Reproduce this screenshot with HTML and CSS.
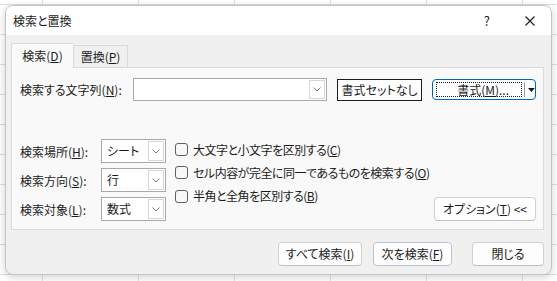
FILE: index.html
```html
<!DOCTYPE html>
<html lang="ja">
<head>
<meta charset="utf-8">
<link rel="stylesheet" href="styles.css">
</head>
<body>
<div class="dialog">
  <div class="titlebar">
    <span class="title">検索と置換</span>
    <span class="spacer"></span>
    <span class="help">?</span>
    <svg class="close" width="10" height="10" viewBox="0 0 10 10"><path d="M0.5 0.5L9.5 9.5M9.5 0.5L0.5 9.5" stroke="#1b1b1b" stroke-width="1.1" fill="none"/></svg>
  </div>
  <div class="content">
    <div class="tabs">
      <div class="tab active">検索(<u>D</u>)</div>
      <div class="tab">置換(<u>P</u>)</div>
    </div>
    <div class="panel">
      <div class="find-row">
        <label class="find-label">検索する文字列(<u>N</u>):</label>
        <div class="combo">
          <span class="combo-text"></span>
          <span class="drop"><svg width="8" height="5" viewBox="0 0 8 5"><path d="M0.5 0.5L4 4L7.5 0.5" stroke="#7a7a7a" fill="none"/></svg></span>
        </div>
        <button class="btn btn-noformat">書式セットなし</button>
        <div class="split">
          <span class="split-main">書式(<u>M</u>)...</span>
          <span class="split-div"></span>
          <svg class="split-arrow" width="7" height="4" viewBox="0 0 7 4"><path d="M0 0H7L3.5 4Z" fill="#1b1b1b"/></svg>
        </div>
      </div>
      <div class="options">
        <div class="selects">
          <label>検索場所(<u>H</u>):</label>
          <div class="select"><span class="select-text">シート</span><span class="drop"><svg width="8" height="5" viewBox="0 0 8 5"><path d="M0.5 0.5L4 4L7.5 0.5" stroke="#7a7a7a" fill="none"/></svg></span></div>
          <label>検索方向(<u>S</u>):</label>
          <div class="select"><span class="select-text">行</span><span class="drop"><svg width="8" height="5" viewBox="0 0 8 5"><path d="M0.5 0.5L4 4L7.5 0.5" stroke="#7a7a7a" fill="none"/></svg></span></div>
          <label>検索対象(<u>L</u>):</label>
          <div class="select"><span class="select-text">数式</span><span class="drop"><svg width="8" height="5" viewBox="0 0 8 5"><path d="M0.5 0.5L4 4L7.5 0.5" stroke="#7a7a7a" fill="none"/></svg></span></div>
        </div>
        <div class="checks">
          <div class="check"><span class="box"></span>大文字と小文字を区別する(<u>C</u>)</div>
          <div class="check"><span class="box"></span>セル内容が完全に同一であるものを検索する(<u>O</u>)</div>
          <div class="check"><span class="box"></span>半角と全角を区別する(<u>B</u>)</div>
        </div>
        <span class="spacer"></span>
        <button class="btn btn-options">オプション(<u>T</u>) &lt;&lt;</button>
      </div>
    </div>
    <div class="footer">
      <button class="btn btn-all">すべて検索(<u>I</u>)</button>
      <button class="btn btn-next">次を検索(<u>F</u>)</button>
      <button class="btn btn-close">閉じる</button>
    </div>
  </div>
</div>
</body>
</html>
```
FILE: styles.css
```css
* { box-sizing: border-box; }
html, body { height: 100%; }
body {
  margin: 0;
  background-color: #ffffff;
  background-image:
    linear-gradient(to right, #dedede 1px, transparent 1px),
    linear-gradient(to bottom, #dedede 1px, transparent 1px);
  background-size: 96px 100%, 100% 30px;
  background-position: 42px 0, 0 4px;
  font-family: "Noto Sans CJK JP", "Noto Sans", sans-serif;
  font-feature-settings: "palt";
  font-size: 12px;
  color: #1b1b1b;
  overflow: hidden;
  white-space: nowrap;
}
u { text-decoration: underline; text-underline-offset: 1px; }
.dialog {
  margin: 5px;
  width: 547px;
  height: 270px;
  border: 1px solid #c4c4c4;
  border-radius: 8px;
  background: #f0f0f0;
  overflow: hidden;
  display: flex;
  flex-direction: column;
  box-shadow: 0 2px 8px rgba(0,0,0,0.18);
}
.titlebar {
  height: 29px;
  flex: none;
  background: #ffffff;
  display: flex;
  align-items: center;
  padding-left: 7px;
}
.title { font-size: 12px; line-height: 14px; }
.spacer { flex: 1; }
.help { font-size: 13px; margin-right: 35px; line-height: 14px; }
.close { margin-right: 16px; }
.content {
  padding: 8px 7px 0 5px;
  display: flex;
  flex-direction: column;
}
.tabs {
  display: flex;
  align-items: flex-end;
  height: 24px;
  position: relative;
  z-index: 1;
}
.tab {
  height: 22px;
  width: 55px;
  border: 1px solid #dadada;
  border-bottom: none;
  background: #f0f0f0;
  display: flex;
  align-items: center;
  justify-content: center;
  line-height: 14px;
  padding-top: 1px;
}
.tab.active {
  width: 62px;
  height: 25px;
  background: #f9f9f9;
  margin-bottom: -1px;
  border-right: none;
  padding-top: 0;
}
.panel {
  height: 163px;
  border: 1px solid #dadada;
  background: #f9f9f9;
  padding: 10px 7px 0 8px;
  display: flex;
  flex-direction: column;
}
.find-row {
  display: flex;
  align-items: center;
  height: 23px;
}
.find-label { width: 113px; line-height: 14px; }
.combo {
  width: 195px;
  height: 23px;
  border: 1px solid #a9a9a9;
  background: #fff;
  display: flex;
  justify-content: flex-end;
  padding: 1px;
}
.drop {
  width: 16px;
  border: 1px solid #d6d6d6;
  background: #fff;
  display: flex;
  align-items: center;
  justify-content: center;
}
.btn {
  font-family: inherit;
  font-feature-settings: "palt";
  font-size: 12px;
  color: #1b1b1b;
  background: #fdfdfd;
  border: 1px solid #d0d0d0;
  border-bottom-color: #c0c0c0;
  border-radius: 4px;
  padding: 0;
  line-height: 14px;
  white-space: nowrap;
  display: flex;
  align-items: center;
  justify-content: center;
}
.btn-noformat {
  margin-left: 10px;
  width: 85px;
  height: 22px;
  border: 1px solid #1b1b1b;
  border-radius: 0;
  background: #fff;
}
.split {
  margin-left: 10px;
  width: 104px;
  height: 21px;
  border: 1px solid #0067c0;
  border-radius: 4px;
  background: #fff;
  display: flex;
  align-items: center;
  padding: 2px 0 2px 3px;
}
.split-main {
  width: 88px;
  height: 15px;
  border: 1px dotted #1b1b1b;
  display: flex;
  align-items: center;
  justify-content: center;
  padding-left: 8px;
  line-height: 13px;
}
.split-div {
  width: 1px;
  height: 15px;
  background: #9a9a9a;
  margin-left: 2px;
}
.split-arrow { margin-left: 3px; }
.options {
  margin-top: 38px;
  display: flex;
  align-items: flex-start;
}
.selects {
  display: grid;
  grid-template-columns: 81px 65px;
  grid-auto-rows: 24px;
  row-gap: 5px;
  align-items: center;
}
.selects label { line-height: 14px; padding-top: 1px; }
.select {
  height: 24px;
  border: 1px solid #a9a9a9;
  background: #fff;
  display: flex;
  padding: 1px;
}
.select-text { flex: 1; padding-left: 4px; display: flex; align-items: center; line-height: 14px; }
.checks {
  margin-left: 9px;
  margin-top: -1px;
  display: flex;
  flex-direction: column;
}
.check {
  height: 23.3px;
  display: flex;
  align-items: center;
  line-height: 14px;
  letter-spacing: -0.5px;
}
.box {
  width: 13px;
  height: 13px;
  border: 1px solid #606060;
  border-radius: 3px;
  background: #f7f7f7;
  margin-right: 5px;
  flex: none;
}
.btn-options {
  width: 102px;
  height: 24px;
  margin-top: 58px;
  background: #fff;
}
.footer {
  margin-top: 12px;
  display: flex;
  justify-content: flex-end;
}
.footer .btn { height: 24px; }
.btn-all { width: 84px; }
.btn-next { width: 79px; margin-left: 11px; border-color: #b5c3d4; }
.btn-close { width: 72px; margin-left: 20px; }
```
